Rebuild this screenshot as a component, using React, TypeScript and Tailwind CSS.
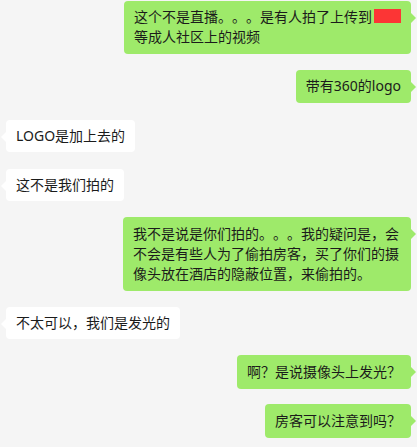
import React from 'react'

type Msg = { side: 'left' | 'right'; text: React.ReactNode; mt: string; py: string }

const messages: Msg[] = [
  {
    side: 'right',
    mt: 'mt-[1px]',
    py: 'pt-[6px] pb-[7px]',
    text: (
      <>
        这个不是直播。。。是有人拍了上传到
        <span className="inline-block w-[27px] h-[14px] ml-[2px] bg-[#fc3535] align-[-1px]"></span>
        <br />
        等成人社区上的视频
      </>
    ),
  },
  { side: 'right', mt: 'mt-[16px]', py: 'pt-[6px] pb-[7px]', text: '带有360的logo' },
  { side: 'left', mt: 'mt-[17px]', py: 'py-[6px]', text: 'LOGO是加上去的' },
  { side: 'left', mt: 'mt-[17px]', py: 'py-[6px]', text: '这不是我们拍的' },
  {
    side: 'right',
    mt: 'mt-[16px]',
    py: 'py-[7px]',
    text: '我不是说是你们拍的。。。我的疑问是，会不会是有些人为了偷拍房客，买了你们的摄像头放在酒店的隐蔽位置，来偷拍的。',
  },
  { side: 'left', mt: 'mt-[16px]', py: 'py-[6px]', text: '不太可以，我们是发光的' },
  { side: 'right', mt: 'mt-[16px]', py: 'py-[7px]', text: '啊？是说摄像头上发光？' },
  { side: 'right', mt: 'mt-[15px]', py: 'py-[7px]', text: '房客可以注意到吗？' },
]

function Bubble({ msg }: { msg: Msg }) {
  const right = msg.side === 'right'
  return (
    <div className={`flex ${right ? 'justify-end pr-[6px]' : 'justify-start pl-[6px]'} ${msg.mt}`}>
      <div
        className={`relative max-w-[288px] rounded-[4px] px-[10px] ${msg.py} text-[14px] leading-[20px] text-[#1b1b1b] [text-spacing-trim:space-all] ${
          right ? 'bg-[#9eea6a]' : 'bg-white'
        }`}
      >
        {msg.text}
        {right ? (
          <span className="absolute top-[12px] right-[-5px] w-0 h-0 border-y-[5px] border-y-transparent border-l-[5px] border-l-[#9eea6a]"></span>
        ) : (
          <span className="absolute top-[12px] left-[-5px] w-0 h-0 border-y-[5px] border-y-transparent border-r-[5px] border-r-white"></span>
        )}
      </div>
    </div>
  )
}

export default function App() {
  return (
    <div
      className="w-[417px] h-[447px] bg-[#f5f5f5] overflow-hidden flex flex-col"
      style={{ fontFamily: '"Noto Sans", "Noto Sans CJK SC", sans-serif' }}
    >
      {messages.map((m, i) => (
        <Bubble key={i} msg={m} />
      ))}
    </div>
  )
}
